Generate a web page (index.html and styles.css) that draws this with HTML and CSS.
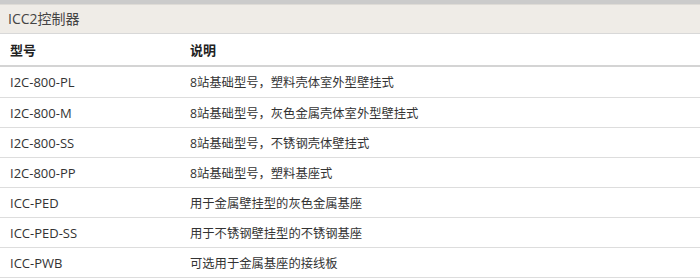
FILE: index.html
```html
<!DOCTYPE html>
<html lang="zh-CN">
<head>
<meta charset="utf-8">
<title>ICC2控制器</title>
<link rel="stylesheet" href="styles.css">
</head>
<body>
<div class="panel">
  <div class="title">ICC2控制器</div>
  <table class="spec">
    <thead>
      <tr><th class="c1">型号</th><th class="c2">说明</th></tr>
    </thead>
    <tbody>
      <tr><td class="c1">I2C-800-PL</td><td class="c2">8站基础型号，塑料壳体室外型壁挂式</td></tr>
      <tr><td class="c1">I2C-800-M</td><td class="c2">8站基础型号，灰色金属壳体室外型壁挂式</td></tr>
      <tr><td class="c1">I2C-800-SS</td><td class="c2">8站基础型号，不锈钢壳体壁挂式</td></tr>
      <tr><td class="c1">I2C-800-PP</td><td class="c2">8站基础型号，塑料基座式</td></tr>
      <tr><td class="c1">ICC-PED</td><td class="c2">用于金属壁挂型的灰色金属基座</td></tr>
      <tr><td class="c1">ICC-PED-SS</td><td class="c2">用于不锈钢壁挂型的不锈钢基座</td></tr>
      <tr><td class="c1">ICC-PWB</td><td class="c2">可选用于金属基座的接线板</td></tr>
    </tbody>
  </table>
</div>
</body>
</html>
```
FILE: styles.css
```css
html, body {
  margin: 0;
  padding: 0;
  background: #ffffff;
}
.panel {
  width: 700px;
  border-top: 4px solid #cbcbcb;
  font-family: "Open Sans", "Noto Sans CJK SC", sans-serif;
  color: #333333;
}
.title {
  height: 28px;
  line-height: 28px;
  padding-left: 8px;
  background: #efece7;
  border-top: 1px solid #dedbd6;
  border-bottom: 1px solid #d8d8d8;
  font-size: 14px;
  color: #444444;
}
.spec {
  width: 100%;
  border-collapse: collapse;
  font-size: 12.3px;
}
.spec th {
  height: 31px;
  padding: 0 0 0 10px;
  text-align: left;
  font-weight: bold;
  font-size: 13px;
  color: #222222;
  border-bottom: 2px solid #d4d4d4;
  vertical-align: middle;
}
.spec td {
  height: 29px;
  padding: 0 0 0 10px;
  border-bottom: 1px solid #dddddd;
  vertical-align: middle;
}
.spec tbody tr:first-child td {
  height: 30px;
}
.spec .c1 {
  width: 170px;
}
.spec td.c1 {
  font-size: 13px;
}
.spec .c2 {
  padding-left: 10px;
}
```
